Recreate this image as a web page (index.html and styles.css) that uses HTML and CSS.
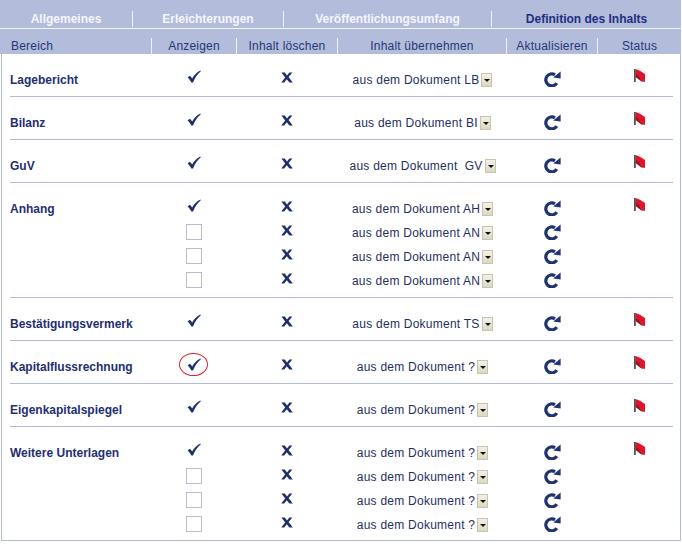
FILE: index.html
```html
<!DOCTYPE html>
<html lang="de">
<head>
<meta charset="utf-8">
<title>Definition des Inhalts</title>
<link rel="stylesheet" href="styles.css">
</head>
<body>
<svg class="defs" width="0" height="0" aria-hidden="true">
  <symbol id="i-check" viewBox="0 0 14 13"><path d="M0.6 7.2 L3 5.8 L5.2 8.4 C7 5 9.6 2.2 13.4 0.4 L13.8 1.2 C10.6 3.8 8 7.4 6 12.4 L4.4 12.6 C3.4 10.6 2 8.8 0.6 7.2 Z" fill="#1f2f6e"/></symbol>
  <symbol id="i-x" viewBox="0 0 12 11"><path d="M0.4 0.4 H3.8 L6 3.4 L8.4 0.4 H11.4 L7.6 5 L11.8 10.6 H8.4 L5.8 7.2 L3.2 10.6 H0.2 L4.2 5.4 Z" fill="#1f2f6e"/></symbol>
  <symbol id="i-refresh" viewBox="0 0 17 16"><path d="M12.8 12.2 A6 6 0 1 1 11 3.8" fill="none" stroke="#1f3272" stroke-width="3.2"/><path d="M16.6 0.4 L16.6 7.6 L9.2 6.6 Z" fill="#1f3272"/></symbol>
  <symbol id="i-flag" viewBox="0 0 11 13"><path d="M1.5 0 L6 1.8 L11 5 V13 L8.4 12 L5 7.5 L1.5 6 Z" fill="#e2142c"/><path d="M1.5 5 L5 7 L8.4 12 L11 13 L7.4 12.6 L1.5 8 Z" fill="#a01020"/><path d="M0 0 H1.8 V13 H0 Z" fill="#5e4c52"/></symbol>
</svg>
<div class="panel">
  <header class="head">
    <nav class="tabs">
      <span class="tab">Allgemeines</span>
      <span class="tab">Erleichterungen</span>
      <span class="tab">Veröffentlichungsumfang</span>
      <span class="tab tab-active">Definition des Inhalts</span>
    </nav>
    <div class="cols">
      <span class="col col-first">Bereich</span>
      <span class="col">Anzeigen</span>
      <span class="col">Inhalt löschen</span>
      <span class="col">Inhalt übernehmen</span>
      <span class="col">Aktualisieren</span>
      <span class="col">Status</span>
    </div>
  </header>
  <main class="body">
    <section class="group">
      <div class="line"><b class="name">Lagebericht</b><span class="cell"><svg class="ic-check"><use href="#i-check"/></svg></span><span class="cell"><svg class="ic-x"><use href="#i-x"/></svg></span><span class="cell"><span class="doc">aus dem Dokument LB</span><i class="drop"></i></span><span class="cell"><svg class="ic-ref"><use href="#i-refresh"/></svg></span><span class="cell"><svg class="ic-flag"><use href="#i-flag"/></svg></span></div>
    </section>
    <section class="group">
      <div class="line"><b class="name">Bilanz</b><span class="cell"><svg class="ic-check"><use href="#i-check"/></svg></span><span class="cell"><svg class="ic-x"><use href="#i-x"/></svg></span><span class="cell"><span class="doc">aus dem Dokument BI</span><i class="drop"></i></span><span class="cell"><svg class="ic-ref"><use href="#i-refresh"/></svg></span><span class="cell"><svg class="ic-flag"><use href="#i-flag"/></svg></span></div>
    </section>
    <section class="group">
      <div class="line"><b class="name">GuV</b><span class="cell"><svg class="ic-check"><use href="#i-check"/></svg></span><span class="cell"><svg class="ic-x"><use href="#i-x"/></svg></span><span class="cell"><span class="doc">aus dem Dokument &nbsp;GV</span><i class="drop"></i></span><span class="cell"><svg class="ic-ref"><use href="#i-refresh"/></svg></span><span class="cell"><svg class="ic-flag"><use href="#i-flag"/></svg></span></div>
    </section>
    <section class="group">
      <div class="line"><b class="name">Anhang</b><span class="cell"><svg class="ic-check"><use href="#i-check"/></svg></span><span class="cell"><svg class="ic-x"><use href="#i-x"/></svg></span><span class="cell"><span class="doc">aus dem Dokument AH</span><i class="drop"></i></span><span class="cell"><svg class="ic-ref"><use href="#i-refresh"/></svg></span><span class="cell"><svg class="ic-flag"><use href="#i-flag"/></svg></span></div>
      <div class="line"><span></span><span class="cell"><i class="box"></i></span><span class="cell"><svg class="ic-x"><use href="#i-x"/></svg></span><span class="cell"><span class="doc">aus dem Dokument AN</span><i class="drop"></i></span><span class="cell"><svg class="ic-ref"><use href="#i-refresh"/></svg></span><span></span></div>
      <div class="line"><span></span><span class="cell"><i class="box"></i></span><span class="cell"><svg class="ic-x"><use href="#i-x"/></svg></span><span class="cell"><span class="doc">aus dem Dokument AN</span><i class="drop"></i></span><span class="cell"><svg class="ic-ref"><use href="#i-refresh"/></svg></span><span></span></div>
      <div class="line"><span></span><span class="cell"><i class="box"></i></span><span class="cell"><svg class="ic-x"><use href="#i-x"/></svg></span><span class="cell"><span class="doc">aus dem Dokument AN</span><i class="drop"></i></span><span class="cell"><svg class="ic-ref"><use href="#i-refresh"/></svg></span><span></span></div>
    </section>
    <section class="group">
      <div class="line"><b class="name">Bestätigungsvermerk</b><span class="cell"><svg class="ic-check"><use href="#i-check"/></svg></span><span class="cell"><svg class="ic-x"><use href="#i-x"/></svg></span><span class="cell"><span class="doc">aus dem Dokument TS</span><i class="drop"></i></span><span class="cell"><svg class="ic-ref"><use href="#i-refresh"/></svg></span><span class="cell"><svg class="ic-flag"><use href="#i-flag"/></svg></span></div>
    </section>
    <section class="group">
      <div class="line"><b class="name">Kapitalflussrechnung</b><span class="cell"><span class="ring"><svg class="ic-check"><use href="#i-check"/></svg></span></span><span class="cell"><svg class="ic-x"><use href="#i-x"/></svg></span><span class="cell"><span class="doc">aus dem Dokument ?</span><i class="drop"></i></span><span class="cell"><svg class="ic-ref"><use href="#i-refresh"/></svg></span><span class="cell"><svg class="ic-flag"><use href="#i-flag"/></svg></span></div>
    </section>
    <section class="group">
      <div class="line"><b class="name">Eigenkapitalspiegel</b><span class="cell"><svg class="ic-check"><use href="#i-check"/></svg></span><span class="cell"><svg class="ic-x"><use href="#i-x"/></svg></span><span class="cell"><span class="doc">aus dem Dokument ?</span><i class="drop"></i></span><span class="cell"><svg class="ic-ref"><use href="#i-refresh"/></svg></span><span class="cell"><svg class="ic-flag"><use href="#i-flag"/></svg></span></div>
    </section>
    <section class="group group-last">
      <div class="line"><b class="name">Weitere Unterlagen</b><span class="cell"><svg class="ic-check"><use href="#i-check"/></svg></span><span class="cell"><svg class="ic-x"><use href="#i-x"/></svg></span><span class="cell"><span class="doc">aus dem Dokument ?</span><i class="drop"></i></span><span class="cell"><svg class="ic-ref"><use href="#i-refresh"/></svg></span><span class="cell"><svg class="ic-flag"><use href="#i-flag"/></svg></span></div>
      <div class="line"><span></span><span class="cell"><i class="box"></i></span><span class="cell"><svg class="ic-x"><use href="#i-x"/></svg></span><span class="cell"><span class="doc">aus dem Dokument ?</span><i class="drop"></i></span><span class="cell"><svg class="ic-ref"><use href="#i-refresh"/></svg></span><span></span></div>
      <div class="line"><span></span><span class="cell"><i class="box"></i></span><span class="cell"><svg class="ic-x"><use href="#i-x"/></svg></span><span class="cell"><span class="doc">aus dem Dokument ?</span><i class="drop"></i></span><span class="cell"><svg class="ic-ref"><use href="#i-refresh"/></svg></span><span></span></div>
      <div class="line"><span></span><span class="cell"><i class="box"></i></span><span class="cell"><svg class="ic-x"><use href="#i-x"/></svg></span><span class="cell"><span class="doc">aus dem Dokument ?</span><i class="drop"></i></span><span class="cell"><svg class="ic-ref"><use href="#i-refresh"/></svg></span><span></span></div>
    </section>
  </main>
</div>
</body>
</html>
```
FILE: styles.css
```css
html, body { margin: 0; padding: 0; background: #fff; }
body { width: 682px; height: 544px; overflow: hidden; font-family: "Liberation Sans", Arial, sans-serif; color: #1f2f6e; }
.defs { display: block; height: 0; }
.panel { width: 681px; }
.head { background: #b4bcdc; }
.tabs { display: grid; grid-template-columns: 133px 151px 208px 189px; height: 28px; border-bottom: 1px solid #f0f2fa; }
.tab { margin-top: 11px; display: flex; align-items: center; justify-content: center; height: 16px; font-size: 12px; font-weight: bold; color: #f4f5fb; border-right: 1px solid #f0f2fa; }
.tab-active { border-right: 0; color: #1f2f7e; }
.cols { display: grid; grid-template-columns: 152px 85px 101px 169px 91px 83px; height: 25px; }
.col { margin-top: 9px; display: flex; align-items: center; justify-content: center; font-size: 12px; letter-spacing: .2px; color: #26367a; border-right: 1px solid #f0f2fa; }
.col:last-child { border-right: 0; }
.col-first { justify-content: flex-start; padding-left: 11px; }
.body { border-left: 1px solid #b6bccf; border-right: 1px solid #b6bccf; border-bottom: 1px solid #b6bccf; margin-left: 1px; width: 680px; height: 487px; box-sizing: border-box; }
.group { margin: 0 7px 0 8px; padding: 14px 0 4px; border-bottom: 1px solid #b4bcd4; }
.group-last { border-bottom: 0; }
.line { display: grid; grid-template-columns: 141px 85px 101px 169px 91px 75px; height: 24px; align-items: center; }
.name { font-size: 12px; font-weight: bold; color: #1f2f72; }
.cell { display: flex; align-items: center; justify-content: center; height: 24px; font-size: 12px; }
.doc { margin-left: 2px; letter-spacing: .25px; white-space: pre; color: #1f2f5e; }
.drop { display: block; width: 11px; height: 14px; margin-left: 2px; box-sizing: border-box; background: linear-gradient(#f4f2e6, #dcd8c4); border: 1px solid #c8c4b0; position: relative; }
.drop::after { content: ""; position: absolute; left: 2px; top: 5px; border: 3px solid transparent; border-top: 3px solid #111; border-bottom: 0; }
.ic-check { width: 14px; height: 13px; margin-bottom: 7px; }
.ic-x { width: 12px; height: 11px; margin-bottom: 6px; }
.ic-ref { width: 17px; height: 16px; margin-bottom: 3px; margin-left: 2px; }
.ic-flag { width: 11px; height: 13px; margin-bottom: 9px; margin-left: 9px; }
.box { display: block; width: 16px; height: 16px; box-sizing: border-box; border: 1px solid #b8bccc; background: #fff; margin-bottom: 2px; }
.ring { display: flex; align-items: center; justify-content: center; width: 29px; height: 23px; box-sizing: border-box; border: 1.5px solid #e02030; border-radius: 50%; margin-bottom: 5px; }
.ring .ic-check { margin-bottom: 0; }
```
